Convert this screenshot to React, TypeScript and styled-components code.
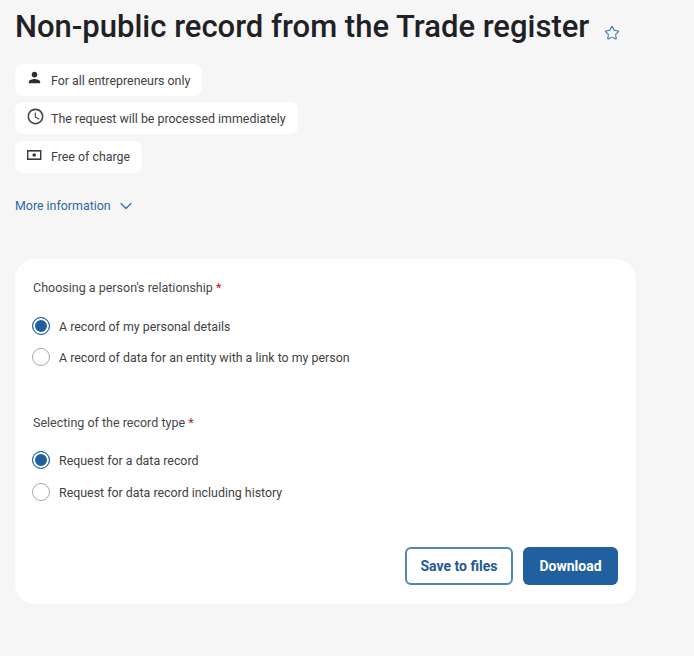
import { FC, ReactNode } from 'react';
import styled, { createGlobalStyle } from 'styled-components';
import { MdAccessTime, MdPerson } from 'react-icons/md';
import { ChevronDown, Star } from 'lucide-react';

const GlobalStyle = createGlobalStyle`
  html, body {
    margin: 0;
    height: 100%;
    background: #f6f6f6;
  }

  body {
    font-family: Roboto, "Liberation Sans", sans-serif;
    color: #3f3f42;
  }

  * {
    box-sizing: border-box;
  }
`;

const BanknoteIcon: FC = () => (
  <svg width="16" height="16" viewBox="0 0 16 16" fill="none">
    <rect x="1" y="3" width="14.4" height="10" fill="#3a3a3d" />
    <rect x="2.4" y="4.6" width="11.6" height="6.8" fill="#fff" />
    <circle cx="8.2" cy="8" r="1.8" fill="#3a3a3d" />
  </svg>
);

const InfoPill: FC<{ icon: ReactNode; iconTop: number; children: ReactNode }> = ({ icon, iconTop, children }) => (
  <Pill>
    <PillIcon $top={iconTop}>{icon}</PillIcon>
    <span>{children}</span>
  </Pill>
);

const RadioRow: FC<{ checked?: boolean; children: ReactNode }> = ({ checked, children }) => (
  <RadioLabel>
    <RadioMark $checked={checked} />
    <RadioText>{children}</RadioText>
  </RadioLabel>
);

export default function App() {
  return (
    <Page>
      <GlobalStyle />
      <TitleRow>
        <Title>Non-public record from the Trade register</Title>
        <FavouriteIcon>
          <Star size={16} strokeWidth={1.6} />
        </FavouriteIcon>
      </TitleRow>

      <Pills>
        <InfoPill iconTop={5} icon={<MdPerson size={17} color="#2e2e31" />}>For all entrepreneurs only</InfoPill>
        <InfoPill iconTop={5} icon={<MdAccessTime size={19} color="#444" />}>The request will be processed immediately</InfoPill>
        <InfoPill iconTop={6} icon={<BanknoteIcon />}>Free of charge</InfoPill>
      </Pills>

      <MoreLink>
        More information
        <ChevronDown size={20} strokeWidth={1.3} />
      </MoreLink>

      <Card>
        <Question>
          Choosing a person's relationship <Required>*</Required>
        </Question>
        <RadioGroup>
          <RadioRow checked>A record of my personal details</RadioRow>
          <RadioRow>A record of data for an entity with a link to my person</RadioRow>
        </RadioGroup>

        <SecondQuestion>
          Selecting of the record type <Required>*</Required>
        </SecondQuestion>
        <RadioGroup $second>
          <RadioRow checked>Request for a data record</RadioRow>
          <RadioRow>Request for data record including history</RadioRow>
        </RadioGroup>

        <Actions>
          <OutlineButton>Save to files</OutlineButton>
          <PrimaryButton>Download</PrimaryButton>
        </Actions>
      </Card>
    </Page>
  );
}

const Page = styled.main`
  width: 694px;
  height: 656px;
  padding: 8px 58px 0 15px;
  background: #f6f6f6;
  overflow: hidden;
`;

const TitleRow = styled.div`
  display: flex;
  align-items: center;
  height: 38px;
  white-space: nowrap;
`;

const Title = styled.h1`
  margin: 0;
  font-size: 31px;
  line-height: 38px;
  font-weight: 500;
  color: #212125;
`;

const FavouriteIcon = styled.span`
  display: flex;
  margin: 12px 0 0 15px;
  color: #3a78b8;
`;

const Pills = styled.div`
  display: flex;
  flex-direction: column;
  align-items: flex-start;
  gap: 6.4px;
  margin-top: 18px;
`;

const Pill = styled.div`
  display: flex;
  align-items: center;
  height: 32px;
  padding: 0 12px 0 36px;
  position: relative;
  background: #fff;
  border-radius: 8px;
  font-size: 12.4px;
  color: #3f3f42;
`;

const PillIcon = styled.span<{ $top: number }>`
  position: absolute;
  left: 11px;
  top: ${({ $top }) => $top}px;
  display: flex;
`;

const MoreLink = styled.a`
  display: flex;
  align-items: center;
  gap: 5px;
  margin-top: 25.2px;
  height: 16px;
  font-size: 12.4px;
  color: #2f689f;
`;

const Card = styled.section`
  width: 621px;
  height: 345px;
  margin-top: 45px;
  padding: 21px 18px 0;
  background: #fff;
  border-radius: 20px;
  display: flex;
  flex-direction: column;
`;

const Question = styled.div`
  height: 16px;
  font-size: 12.5px;
  line-height: 16px;
  color: #47474a;
`;

const SecondQuestion = styled(Question)`
  margin-top: 48.5px;
`;

const Required = styled.span`
  color: #b3261e;
`;

const RadioGroup = styled.div<{ $second?: boolean }>`
  display: flex;
  flex-direction: column;
  gap: ${({ $second }) => ($second ? '14.5px' : '13.5px')};
  margin-top: ${({ $second }) => ($second ? '20px' : '21px')};
`;

const RadioLabel = styled.label`
  display: flex;
  align-items: center;
  gap: 9px;
  height: 18px;
  font-size: 12.4px;
  color: #3f3f42;
`;

const RadioText = styled.span`
  padding-top: 1px;
`;

const RadioMark = styled.span<{ $checked?: boolean }>`
  width: 18px;
  height: 18px;
  flex: none;
  margin-left: -1px;
  border-radius: 50%;
  border: ${({ $checked }) => ($checked ? '1.5px solid #1f5fa0' : '1.5px solid #a9a9a9')};
  background: ${({ $checked }) => ($checked ? '#1f5fa0' : '#fff')};
  box-shadow: ${({ $checked }) => ($checked ? 'inset 0 0 0 2px #fff' : 'none')};
`;

const Actions = styled.div`
  display: flex;
  justify-content: flex-end;
  gap: 10px;
  margin-top: 45.5px;
`;

const ButtonBase = styled.button`
  height: 38px;
  border-radius: 6px;
  font-family: inherit;
  font-size: 14px;
  font-weight: 700;
`;

const OutlineButton = styled(ButtonBase)`
  width: 108px;
  background: #fff;
  border: 2px solid #4f86bd;
  color: #245a94;
`;

const PrimaryButton = styled(ButtonBase)`
  width: 95px;
  background: #21609f;
  border: none;
  color: #fff;
`;
